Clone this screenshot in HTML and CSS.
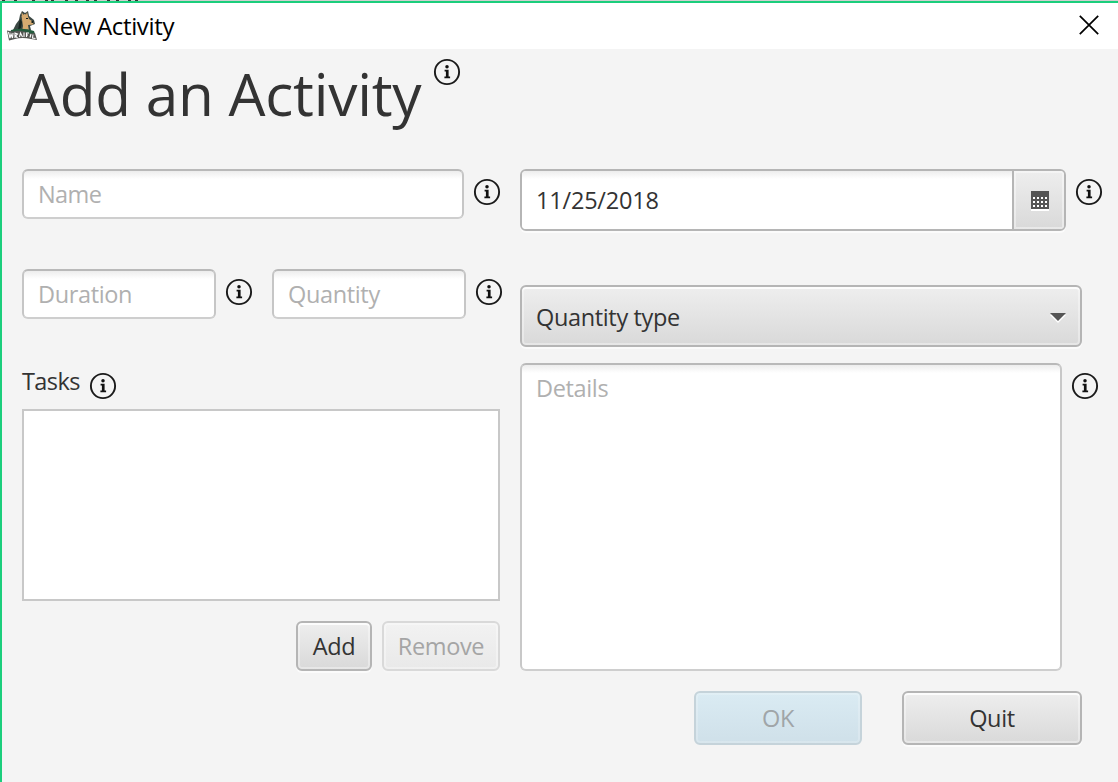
FILE: index.html
```html
<!DOCTYPE html>
<html lang="en">
<head>
<meta charset="utf-8">
<title>New Activity</title>
<link rel="stylesheet" href="styles.css">
</head>
<body>
<svg class="defs" aria-hidden="true">
  <symbol id="info" viewBox="0 0 28 28">
    <circle cx="14" cy="14" r="12.1" fill="none" stroke="#1a1a1a" stroke-width="1.9"/>
    <circle cx="14" cy="8.8" r="1.75" fill="#111"/>
    <path d="M11.6 11.7h4v6.7h1.5v1.9h-5.7v-1.9h1.5v-4.8h-1.3z" fill="#111"/>
  </symbol>
</svg>
<div class="backdrop"><svg width="150" height="1" viewBox="0 0 150 1"><path d="M2 .5h3M14 .5h3M32 .5h3M45 .5h3M51 .5h3M65 .5h3M75 .5h3M86 .5h3M94 .5h3M107 .5h3M116 .5h3M128 .5h3M135 .5h3" stroke="#333"/></svg></div>
<div class="window">
  <header class="titlebar">
    <svg class="logo" viewBox="0 0 32 32">
      <path d="M7 20l3-6 3-4 1-5 2-4 3 2 3-2 1 5 5 4 1 4-5 2 1 4z" fill="#3b4844"/>
      <path d="M15.500 6l3-2 3 1 1.500 4 4.500 3-.5 2.500-5 .5 1 6h-7l1-5z" fill="#d5aa70"/>
      <path d="M15.500 2l2 3-1.500 2zM21 2l1 4-2-1z" fill="#d5aa70"/>
      <path d="M20 8h2v1h-2zM25.500 11h2v2h-2z" fill="#15201d"/>
      <path d="M14 9l2 3-1 6-3 2z" fill="#17231f"/>
      <path d="M5 20q12-3 23 1l1 3H4z" fill="#245b3d"/>
      <path d="M1 20.500l6 1q9-2 17 2l5-.5 2 7-6-1q-9-2-16 0l-6 1.500z" fill="#555753"/>
      <path d="M2.500 22l1.500 6 1-4 1.500 4 .5-5M9 28v-5l2.500 1-2 2 2 2M13.500 27l1-4 2 4M18 22.500V27M20.500 23v4M20 23h3M20 25h2M25 24l-1 3.500M27 24.500l-.5 3.500 3 .5" fill="none" stroke="#fff" stroke-width="1.1"/>
    </svg>
    <span class="caption">New Activity</span>
    <svg class="close" viewBox="0 0 20 20"><path d="M.8.8l18.4 18.4M19.2.8L.8 19.2" stroke="#000" stroke-width="1.7"/></svg>
  </header>
  <main>
    <div class="heading"><h1>Add an Activity</h1><svg class="info"><use href="#info"/></svg></div>
    <div class="columns">
      <section class="left">
        <div class="row name-row"><div class="field name"><span class="t-name">Name</span></div><svg class="info"><use href="#info"/></svg></div>
        <div class="row amount-row">
          <div class="field small"><span>Duration</span></div><svg class="info"><use href="#info"/></svg>
          <div class="field small second"><span>Quantity</span></div><svg class="info"><use href="#info"/></svg>
        </div>
        <div class="tasks-label"><span class="t-tasks">Tasks</span><svg class="info"><use href="#info"/></svg></div>
        <div class="list"></div>
        <div class="task-buttons"><div class="button add"><span>Add</span></div><div class="button remove disabled"><span>Remove</span></div></div>
      </section>
      <section class="right">
        <div class="row date-row">
          <div class="date"><div class="date-text"><span class="t-date">11/25/2018</span></div>
            <div class="date-button"><svg class="calendar" viewBox="0 0 18 20"><path d="M0 18h18v2H0z" fill="#fff"/><path d="M0 0h18v18H0z" fill="#555"/><path d="M2 7h14M2 11h14M2 15h14" stroke="#fff" stroke-width="2" stroke-dasharray="2"/></svg></div>
          </div><svg class="info"><use href="#info"/></svg>
        </div>
        <div class="button combo"><span>Quantity type</span><svg class="arrow" viewBox="0 0 16 10"><path d="M0 2h16L8 10z" fill="#fff"/><path d="M0 0h16L8 8z" fill="#555"/></svg></div>
        <div class="row details-row"><div class="details"><span>Details</span></div><svg class="info"><use href="#info"/></svg></div>
        <div class="actions"><div class="button ok"><span>OK</span></div><div class="button quit"><span>Quit</span></div></div>
      </section>
    </div>
  </main>
</div>
</body>
</html>
```
FILE: styles.css
```css
* { box-sizing: border-box; }
body { margin: 0; width: 1118px; height: 782px; overflow: hidden; background: #f4f4f4; color: #333; font: 23.5px/32px "Open Sans", "Noto Sans", sans-serif; letter-spacing: -.35px; display: flex; flex-direction: column; }
svg { display: block; flex: none; }
span, h1 { white-space: nowrap; }
.defs { position: absolute; width: 0; height: 0; }
.backdrop { height: 1px; flex: none; background: #d0d0d0; }
.window { flex: 1; border-top: 2px solid #1bce7c; border-left: 2px solid #1bce7c; }
.titlebar { height: 46px; background: #fff; display: flex; align-items: center; padding: 0 19px 0 4px; color: #000; }
.logo { width: 32px; height: 32px; margin-top: -1px; }
.caption { margin-left: 4px; font-size: 24px; letter-spacing: -.35px; }
.close { width: 20px; height: 20px; margin-left: auto; margin-top: -2px; }
main { padding: 0 16px 0 20px; }
.heading { display: flex; height: 120px; }
h1 { margin: 0; width: 411px; font-size: 58.5px; line-height: 80px; font-weight: 400; padding: 4px 0 0 1px; letter-spacing: -.25px; }
.info { width: 28px; height: 28px; }
.heading .info { margin-top: 9px; }
.columns { display: flex; gap: 20px; }
.left { width: 478px; flex: none; }
.right { width: 584px; flex: none; }
.row { display: flex; align-items: flex-start; }
.row .info { margin: 9px 0 0 9px; }
.field { height: 50px; flex: none; border: 2px solid; border-color: #b9b9b9 #c6c6c6 #cecece; border-radius: 6px; background: linear-gradient(#ededed, #fff 8px); padding: 7px 14px; color: #b0b0b0; }
.name { width: 442px; }
.t-name { letter-spacing: -.6px; }
.name-row { height: 100px; }
.small { width: 194px; }
.second { margin-left: 19px; }
.amount-row { height: 96px; width: 490px; }
.tasks-label { height: 44px; display: flex; }
.t-tasks { width: 57px; letter-spacing: -.6px; }
.tasks-label .info { margin: 7px 0 0 10px; }
.list { height: 192px; border: 2px solid #c8c8c8; background: #fff; }
.task-buttons { display: flex; justify-content: flex-end; gap: 10px; padding-top: 20px; }
.button { border: 2px solid #b5b5b5; border-radius: 6px; background: linear-gradient(#eee, #d9d9d9); box-shadow: inset 0 0 0 2px rgba(255,255,255,.35), inset 0 2px #fbfbfb, 0 2px #fbfbfb; display: flex; align-items: center; justify-content: center; }
.add { width: 76px; height: 50px; }
.remove { width: 118px; height: 50px; }
.disabled { color: #a5a5a5; border-color: #d9d9d9; background: linear-gradient(#f2f2f2, #e9e9e9); box-shadow: inset 0 0 0 2px rgba(255,255,255,.35), 0 2px #f6f6f6; }
.date-row { height: 116px; }
.date { width: 546px; height: 62px; display: flex; border: 2px solid #b5b5b5; border-radius: 6px; overflow: hidden; background: #fff; box-shadow: 0 2px #fbfbfb; }
.date-text { flex: 1; padding: 13px 14px; background: linear-gradient(#ededed, #fff 8px); }
.t-date { letter-spacing: -.2px; }
.date-button { width: 52px; border-left: 2px solid #b5b5b5; background: linear-gradient(#eee, #d9d9d9); box-shadow: inset 0 0 0 2px rgba(255,255,255,.4); display: flex; align-items: center; justify-content: center; }
.calendar { width: 18px; height: 20px; margin: 2px 0 0 2px; }
.combo { width: 562px; height: 62px; justify-content: space-between; padding: 1px 14px 0; }
.arrow { width: 16px; height: 10px; margin-top: 2px; }
.details-row { padding-top: 16px; }
.details { width: 542px; height: 308px; border: 2px solid; border-color: #b9b9b9 #c8c8c8 #cecece; border-radius: 6px; background: linear-gradient(#ededed, #fff 8px); padding: 7px 14px; color: #b0b0b0; }
.actions { display: flex; gap: 40px; padding: 20px 22px 0 0; justify-content: flex-end; }
.ok { width: 168px; height: 54px; color: #a0a5a8; border-color: #c5d3da; background: linear-gradient(#daebf3, #cfe0e9); box-shadow: inset 0 0 0 2px rgba(255,255,255,.2); }
.quit { width: 180px; height: 54px; }
```
